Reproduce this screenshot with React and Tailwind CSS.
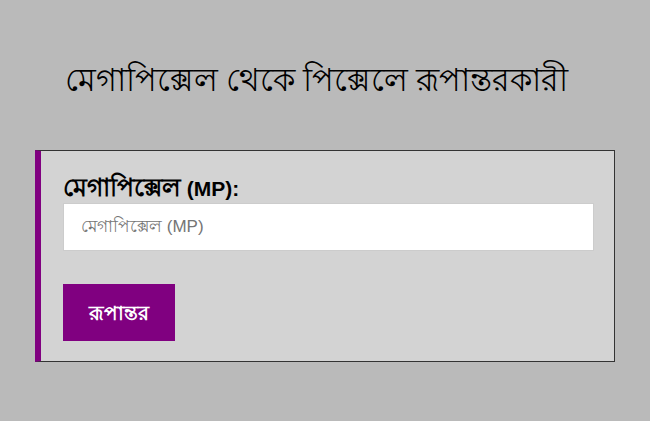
export default function App() {
  return (
    <div className="min-h-screen bg-[#bababa] pt-[56px] font-['Liberation_Sans',Arial,sans-serif]">
      <h1 className="pr-[18px] text-center text-[32px] leading-[48px] font-normal text-black font-['Liberation_Serif',serif]">
        মেগাপিক্সেল থেকে পিক্সেলে রূপান্তরকারী
      </h1>
      <div className="mx-auto mt-[46px] w-[580px] border border-[#333] border-l-[6px] border-l-[#800080] bg-[#d3d3d3] pt-[22px] pr-[20px] pb-[20px] pl-[22px]">
        <label className="block h-[30px] text-[21px] font-bold leading-[29px] text-black">
          <span className="text-[25px]">মেগাপিক্সেল</span> (MP):
        </label>
        <input
          type="text"
          placeholder="মেগাপিক্সেল (MP)"
          className="block h-[48px] w-full border border-[#ccc] bg-white px-[17px] text-[17px] text-black placeholder:text-[#757575] outline-none"
        />
        <button className="mt-[33px] h-[57px] w-[112px] bg-[#800080] text-[20px] font-bold text-white">
          রূপান্তর
        </button>
      </div>
    </div>
  );
}
